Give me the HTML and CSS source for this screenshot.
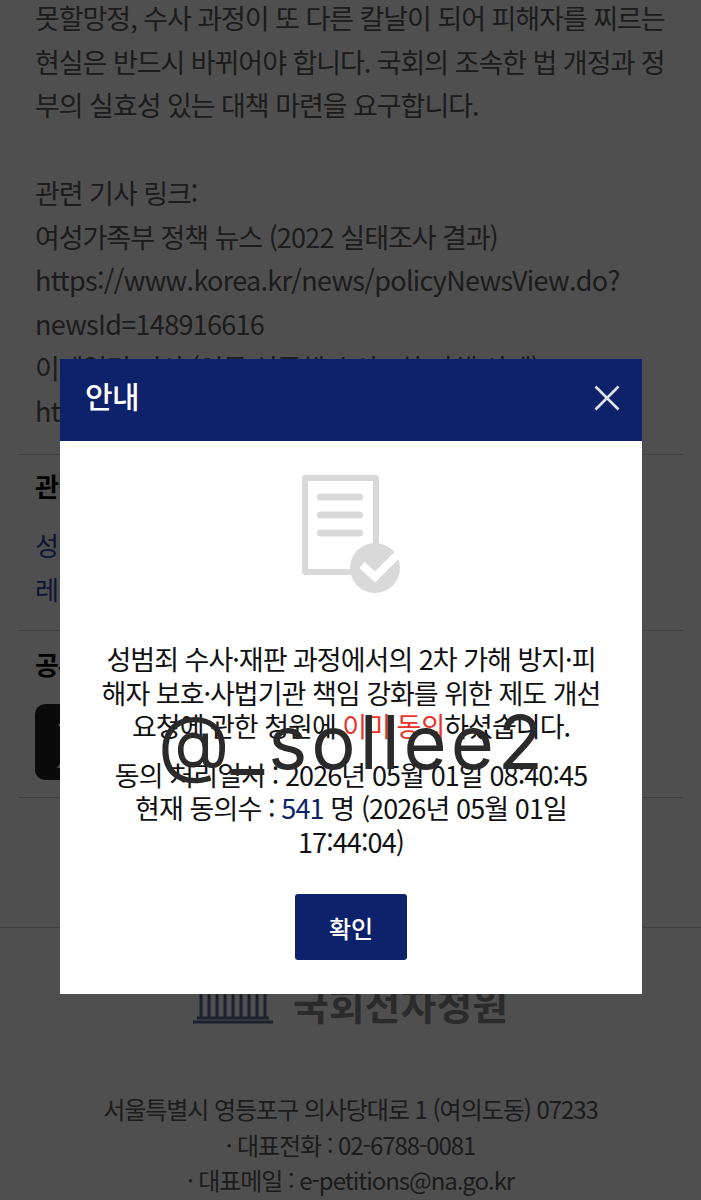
FILE: index.html
```html
<!doctype html>
<html lang="ko">
<head>
  <meta charset="utf-8">
  <title>국회전자청원</title>
  <link rel="stylesheet" href="styles.css">
</head>
<body>
<main class="page">
  <section class="article">
    <p>못할망정, 수사 과정이 또 다른 칼날이 되어 피해자를 찌르는<br>현실은 반드시 바뀌어야 합니다. 국회의 조속한 법 개정과 정<br>부의 실효성 있는 대책 마련을 요구합니다.</p>
    <p class="links">관련 기사 링크:<br>여성가족부 정책 뉴스 (<span class="latin">2022</span> 실태조사 결과)<br><span class="latin">https://www.korea.kr/news/policyNewsView.do?</span><br><span class="latin">newsId=148916616</span><br>이데일리 기사 (인물 성폭행 수사 2차 가해 사례)<br><span class="latin">https://www.edaily.co.kr/news</span></p>
  </section>
  <section class="block related">
    <h2>관련 청원</h2>
    <a href="#">성범죄 수사 과정의 2차 가해</a><br>
    <a href="#">레</a>
  </section>
  <section class="block share">
    <h2>공유</h2>
    <div class="share-x"><span>X</span></div>
  </section>
  <footer class="footer">
    <div class="logo">
      <svg class="logo-mark" viewBox="0 0 80 36" width="80" height="36" aria-hidden="true">
        <path d="M0 34h80M4 30h72M8 6v24M16 6v24M24 6v24M32 6v24M40 6v24M48 6v24M56 6v24M64 6v24M72 6v24" fill="none" stroke="#5c6c96" stroke-width="3"/>
      </svg>
      <strong>국회전자청원</strong>
    </div>
    <address>서울특별시 영등포구 의사당대로 1 (여의도동) 07233<br>· 대표전화 : 02-6788-0081<br>· 대표메일 : e-petitions@na.go.kr</address>
  </footer>
</main>
<div class="dim"></div>
<div class="modal">
  <header class="modal-head">
    <h1>안내</h1>
    <svg class="modal-close" viewBox="0 0 26 26" width="26" height="26" aria-hidden="true">
      <path d="M1.500 1.500l23 23M24.500 1.500l-23 23" fill="none" stroke="#e0e3ee" stroke-width="2.600"/>
    </svg>
  </header>
  <div class="modal-body">
    <svg class="doc-icon" viewBox="0 0 100 118" width="100" height="118" aria-hidden="true">
      <path d="M3 3h71v94H3z" fill="none" stroke="#d9d9d9" stroke-width="6" stroke-linejoin="round"/>
      <path d="M18.500 22h39M18.500 40h39M18.500 58h39" fill="none" stroke="#d9d9d9" stroke-width="7" stroke-linecap="round"/>
      <circle cx="73" cy="93" r="25" fill="#d9d9d9"/>
      <path d="M60 90l13 12 24-24" fill="none" stroke="#fff" stroke-width="8"/>
    </svg>
    <p class="msg">성범죄 수사·재판 과정에서의 2차 가해 방지·피<br>해자 보호·사법기관 책임 강화를 위한 제도 개선<br>요청에 관한 청원에 <em>이미 동의</em>하셨습니다.</p>
    <p class="msg-info">동의 처리일시 : 2026년 05월 01일 08:40:45<br>현재 동의수 : <b>541</b> 명 (2026년 05월 01일<br>17:44:04)</p>
    <button class="btn-ok" type="button">확인</button>
  </div>
</div>
<div class="watermark">@_sollee2</div>
</body>
</html>
```

FILE: styles.css
```css
*{box-sizing:border-box;margin:0;padding:0;}
html,body{height:1200px;overflow:hidden;}
body{font-family:"Noto Sans CJK KR","Noto Sans",sans-serif;background:#fff;color:#5a5a5a;position:relative;}
.page{height:1200px;overflow:hidden;}
.article{margin:-4px 18px 0;height:459px;border-bottom:1px solid #ccc;font-size:27px;line-height:43.700px;letter-spacing:-1.050px;white-space:nowrap;overflow:hidden;}
.article p{padding-left:17px;}
.article .links{margin-top:43.700px;}
.latin{letter-spacing:-.7px;}
.block{margin:0 18px;border-bottom:1px solid #ccc;padding-left:17px;white-space:nowrap;font-size:26px;line-height:44px;letter-spacing:-1px;}
.block h2{font-size:26px;font-weight:700;color:#000;line-height:44px;}
.related{height:176px;padding-top:9px;}
.related h2{margin-bottom:15px;}
.related a{color:#2a48a8;text-decoration:none;}
.share{height:167px;padding-top:11px;}
.share-x{width:76px;height:76px;margin-top:18px;background:#222;border-radius:10px;display:flex;align-items:center;justify-content:center;color:#fff;font-size:60px;}
.footer{margin-top:129px;border-top:1px solid #ccc;text-align:center;}
.logo{display:flex;justify-content:center;align-items:center;gap:20px;margin-top:60px;height:36px;}
.logo strong{font-size:39px;letter-spacing:0;color:#8a8a8a;margin-bottom:6px;}
address{font-style:normal;font-size:24px;line-height:35.500px;letter-spacing:-1.050px;color:#5a5a5a;margin-top:67px;}
.dim{position:absolute;inset:0;background:rgba(0,0,0,.69);}
.modal{position:absolute;left:60px;top:359px;width:582px;height:635px;background:#fff;}
.modal-head{height:82px;background:#0d226b;display:flex;align-items:center;justify-content:space-between;padding:0 22px 4px 25px;}
.modal-head h1{font-size:30px;font-weight:500;color:#fff;letter-spacing:-.5px;margin-bottom:6px;}
.modal-body{display:flex;flex-direction:column;align-items:center;padding:0 10px;text-align:center;color:#111;font-size:27px;line-height:33.500px;letter-spacing:-1px;white-space:nowrap;}
.doc-icon{margin:34px 0 0 0;transform:translateX(1px);}
.msg{margin-top:49px;}
.msg em{font-style:normal;color:#e8332b;}
.msg-info{margin-top:15px;letter-spacing:-.9px;}
.msg-info b{font-weight:400;color:#0d226b;}
.btn-ok{width:112px;height:66px;margin-top:36px;border:none;border-radius:3px;background:#0d226b;color:#fff;font-family:inherit;font-size:24px;font-weight:500;}
.watermark{position:absolute;left:158px;top:692px;font-family:"Inter",sans-serif;font-weight:400;font-size:74px;line-height:100px;letter-spacing:4px;color:#2a2a2a;white-space:nowrap;}
```
